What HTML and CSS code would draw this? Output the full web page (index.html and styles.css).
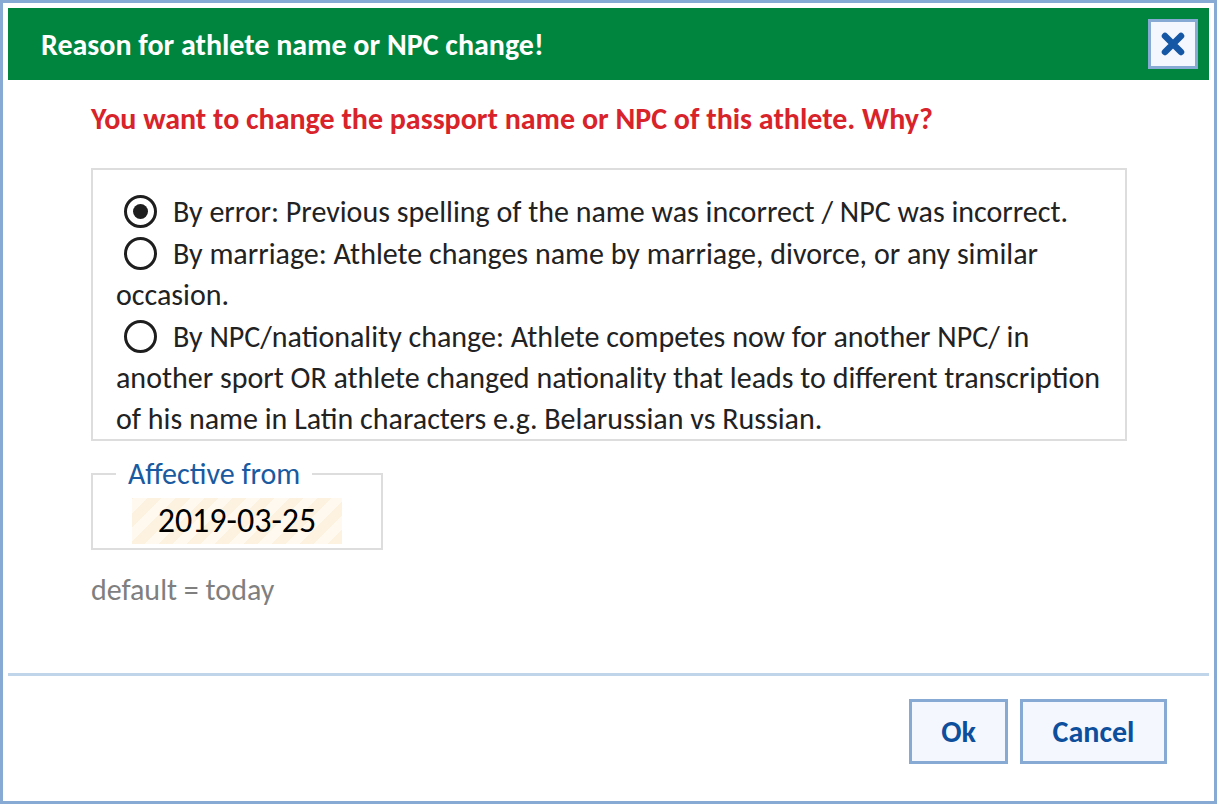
FILE: index.html
```html
<!DOCTYPE html>
<html>
<head>
<meta charset="utf-8">
<link rel="stylesheet" href="styles.css">
</head>
<body>
<div class="dialog">
  <div class="header">
    <h1 class="title">Reason for athlete name or NPC change!</h1>
    <button class="close" type="button" aria-label="Close">
      <svg width="24" height="24" viewBox="0 0 24 24"><path d="M4 4 L20 20 M20 4 L4 20" stroke="#1557a5" stroke-width="6.5" stroke-linecap="round" fill="none"/></svg>
    </button>
  </div>
  <div class="content">
    <p class="question">You want to change the passport name or NPC of this athlete. Why?</p>
    <div class="options">
      <div class="option"><span class="radio checked"></span>By error: Previous spelling of the name was incorrect / NPC was incorrect.</div>
      <div class="option"><span class="radio"></span>By marriage: Athlete changes name by marriage, divorce, or any similar occasion.</div>
      <div class="option"><span class="radio"></span>By NPC/nationality change: Athlete competes now for another NPC/ in another sport OR athlete changed nationality that leads to different transcription of his name in Latin characters e.g. Belarussian vs Russian.</div>
    </div>
    <fieldset class="date-field">
      <legend class="legend">Affective from</legend>
      <div class="date-input">2019-03-25</div>
    </fieldset>
    <p class="hint">default = today</p>
  </div>
  <div class="footer">
    <button class="btn" type="button">Ok</button>
    <button class="btn btn-cancel" type="button">Cancel</button>
  </div>
</div>
</body>
</html>
```
FILE: styles.css
```css
html, body {
  margin: 0;
  padding: 0;
  background: #ffffff;
}
body {
  font-family: Carlito, Lato, "Open Sans", sans-serif;
}
.dialog {
  box-sizing: border-box;
  width: 1217px;
  height: 804px;
  border: 3px solid #86aad3;
  padding: 5px;
  display: flex;
  flex-direction: column;
  background: #fff;
}
.header {
  height: 72px;
  background: #00853f;
  display: flex;
  align-items: center;
  justify-content: space-between;
  padding: 0 11px 0 33px;
  flex: none;
}
.title {
  margin: 0;
  color: #fff;
  font-size: 30px;
  font-weight: bold;
  line-height: 36px;
  padding-top: 2px;
}
.close {
  box-sizing: border-box;
  width: 50px;
  height: 50px;
  border: 3px solid #86aad3;
  background: #f5f7fe;
  padding: 0;
  display: flex;
  align-items: center;
  justify-content: center;
}
.content {
  flex: 1;
  padding: 24px 82px 0 83px;
}
.question {
  margin: 0 0 34px;
  color: #d9232a;
  font-size: 30px;
  font-weight: bold;
  line-height: 30px;
}
.options {
  border: 2px solid #dddddd;
  padding: 21px 12px 0 23px;
  font-size: 30px;
  line-height: 41px;
  color: #222;
}
.option + .option {
  margin-top: 1px;
}
.radio {
  display: inline-block;
  box-sizing: border-box;
  width: 33px;
  height: 33px;
  border: 3px solid #1e1e1e;
  border-radius: 50%;
  margin: 0 16px 0 8px;
  vertical-align: -6px;
  position: relative;
}
.radio.checked::after {
  content: "";
  position: absolute;
  left: 6px;
  top: 6px;
  width: 15px;
  height: 15px;
  border-radius: 50%;
  background: #1e1e1e;
}
.date-field {
  margin: 19px 0 0;
  width: 292px;
  box-sizing: border-box;
  border: 2px solid #dddddd;
  padding: 0 0 4px 23px;
  min-width: 0;
}
.legend {
  margin-left: 0;
  padding: 0 12px;
  color: #1a5aa0;
  font-size: 30px;
  line-height: 28px;
}
.date-input {
  width: 210px;
  height: 46px;
  box-sizing: border-box;
  text-align: center;
  font-size: 34px;
  line-height: 46px;
  color: #000;
  margin: 10px 0 0 16px;
  background: repeating-linear-gradient(-45deg, #fdf2e0 0 10px, #fff9f0 10px 20px);
}
.hint {
  margin: 25px 0 0;
  color: #7f7f7f;
  font-size: 30px;
  line-height: 30px;
}
.footer {
  flex: none;
  border-top: 3px solid #c0d5ea;
  padding: 23px 42px 32px 0;
  display: flex;
  justify-content: flex-end;
  gap: 12px;
}
.btn {
  box-sizing: border-box;
  height: 65px;
  width: 99px;
  border: 3px solid #86aad3;
  background: #f5f7fe;
  color: #0d4f9c;
  font-family: Carlito, Lato, "Open Sans", sans-serif;
  font-size: 30px;
  font-weight: bold;
  padding: 0;
}
.btn-cancel {
  width: 147px;
}
```
